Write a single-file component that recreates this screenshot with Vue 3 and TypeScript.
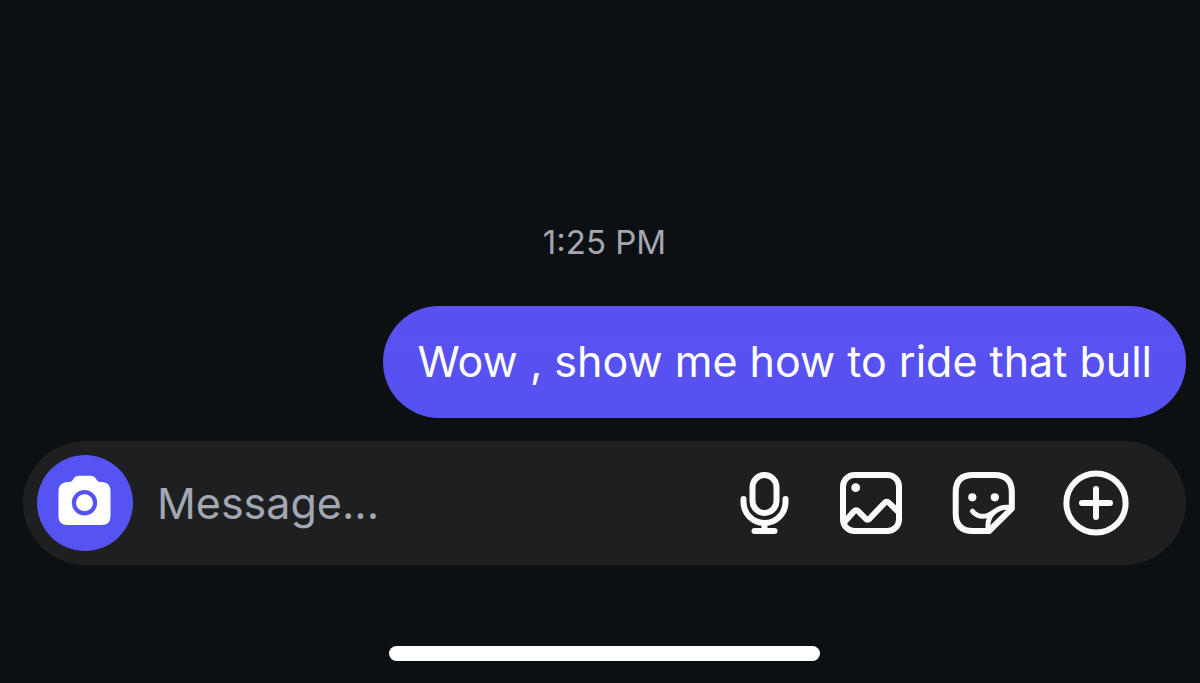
<script setup lang="ts">
import { ref } from 'vue'

interface Message {
  id: number
  text: string
}

const time = '1:25 PM'
const messages: Message[] = [{ id: 1, text: 'Wow , show me how to ride that bull' }]
const draft = ref('')
</script>

<template>
  <div class="screen">
    <main class="thread">
      <time class="stamp">{{ time }}</time>
      <p v-for="message in messages" :key="message.id" class="bubble">{{ message.text }}</p>
    </main>

    <form class="composer" @submit.prevent>
      <button class="camera" type="button" aria-label="Camera">
        <svg viewBox="0 0 96 96" aria-hidden="true">
          <path
            fill="#fff"
            d="M31 27H32C34.500 27 35.500 25.500 36.500 23.800C37.800 21.500 39.500 20.700 42 20.700H53.500C56 20.700 57.700 21.500 59 23.800C60 25.500 61 27 63.500 27H64.500C70.500 27 73.500 30.500 73.500 36V61C73.500 67 70.500 70 64.500 70H30.500C24.500 70 21.500 67 21.500 61V36C21.500 30.500 25 27 31 27Z"
          />
          <circle cx="47.500" cy="47.700" r="10.600" fill="#fff" stroke="#5554f2" stroke-width="4.200" />
        </svg>
      </button>
      <input v-model="draft" class="field" type="text" placeholder="Message..." aria-label="Message" />
      <div class="tools">
        <button class="tool" type="button" aria-label="Voice message">
          <svg viewBox="0 0 68 68" aria-hidden="true">
            <rect x="26.500" y="6" width="24" height="38" rx="12" />
            <path d="M17.500 30V33A21 21 0 0 0 59.500 33V30M38.500 54V62M28.500 62H48.500" />
          </svg>
        </button>
        <button class="tool" type="button" aria-label="Photo">
          <svg viewBox="0 0 68 68" aria-hidden="true">
            <rect x="5" y="6" width="56" height="56" rx="11.500" />
            <path d="M6.500 53L15.800 42.500Q18 40 20.200 42.200L27.500 49.500Q29.600 51.500 31.700 49.500L46.500 34Q48.800 31.600 51.200 34L61 43.500" />
            <circle class="dot" cx="17.700" cy="18.700" r="4.400" />
          </svg>
        </button>
        <button class="tool" type="button" aria-label="Sticker">
          <svg viewBox="0 0 68 68" aria-hidden="true">
            <path d="M39 62H23Q5.700 62 5.700 44.700V23.300Q5.700 6 23 6H44.500Q61.800 6 61.800 23.300V39.500L39 62Z" />
            <path class="fold" d="M61.500 38.200H57C46 38.200 38 47 38 56V61.500" />
            <path class="fold" d="M22.500 42.200Q26.500 47.300 33 47.300Q37.500 47.300 43 43.500" />
            <circle class="dot" cx="22.300" cy="28.300" r="4.100" />
            <circle class="dot" cx="44.800" cy="28.300" r="4.100" />
          </svg>
        </button>
        <button class="tool" type="button" aria-label="More">
          <svg viewBox="0 0 68 68" aria-hidden="true">
            <circle cx="34" cy="34" r="29.600" />
            <path d="M34 20V48M20 34H48" />
          </svg>
        </button>
      </div>
    </form>

    <div class="home-indicator"></div>
  </div>
</template>

<style>
body {
  margin: 0;
  background: #0c1013;
}
</style>

<style scoped>
.screen {
  box-sizing: border-box;
  min-height: 100vh;
  padding: 0 14px 22px 23px;
  display: flex;
  flex-direction: column;
  background: #0c1013;
  font-family: Inter, "Liberation Sans", sans-serif;
}

.thread {
  flex: 1;
  display: flex;
  flex-direction: column;
  justify-content: flex-end;
}

.stamp {
  align-self: center;
  margin-bottom: 44px;
  font-size: 33px;
  line-height: 40px;
  color: #a2a7b1;
}

.bubble {
  align-self: flex-end;
  margin: 0 0 23px;
  padding: 29px 34px 31px;
  border-radius: 56px;
  background: linear-gradient(#5b50f0, #5552f2);
  color: #fff;
  font-size: 43px;
  line-height: 52px;
}

.composer {
  display: flex;
  align-items: center;
  margin-bottom: 81px;
  padding: 14px 56px 14px 14px;
  border-radius: 62px;
  background: #1e1f21;
}

button {
  flex: none;
  margin: 0;
  padding: 0;
  border: 0;
  background: none;
  cursor: pointer;
}

svg {
  display: block;
  width: 100%;
  height: 100%;
}

.camera {
  width: 96px;
  height: 96px;
  border-radius: 50%;
  background: #5554f2;
}

.field {
  flex: 1;
  min-width: 0;
  margin: 0 24px;
  padding: 0;
  border: 0;
  outline: 0;
  background: none;
  color: #fff;
  font-family: inherit;
  font-size: 43px;
  line-height: 52px;
}

.field::placeholder {
  color: #a2a7b1;
  opacity: 1;
}

.tools {
  display: flex;
  gap: 44px;
}

.tool {
  width: 68px;
  height: 68px;
}

.tool svg {
  fill: none;
  stroke: #f8fafc;
  stroke-width: 6;
  stroke-linecap: round;
  stroke-linejoin: round;
}

.tool .fold {
  stroke-width: 5;
}

.tool .dot {
  fill: #f8fafc;
  stroke: none;
}

.home-indicator {
  align-self: center;
  width: 37%;
  height: 15px;
  border-radius: 8px;
  background: #fff;
}
</style>
